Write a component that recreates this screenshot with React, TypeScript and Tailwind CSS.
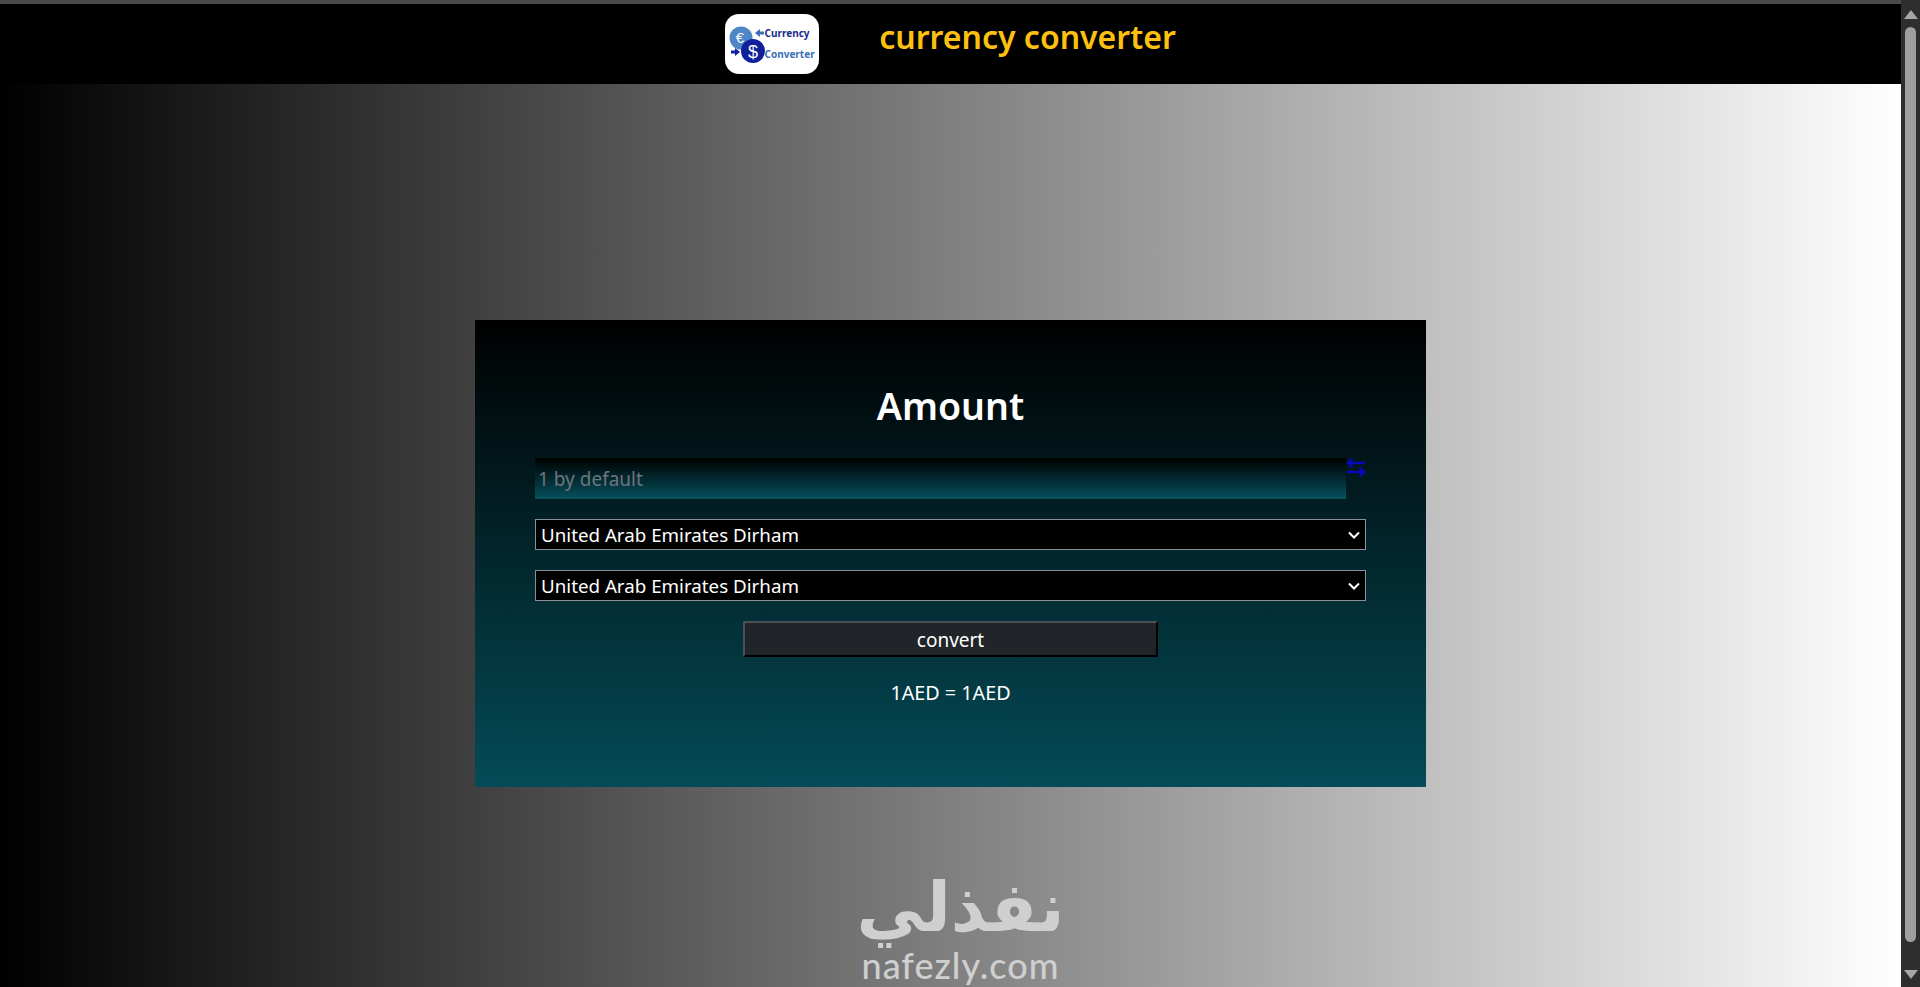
const ui = { fontFamily: '"Noto Sans", "Open Sans", sans-serif' };

function LogoIcon() {
  return (
    <svg viewBox="0 0 94 60" className="h-[60px] w-[94px] shrink-0">
      <rect width="94" height="60" rx="14" fill="#ffffff" />
      <circle cx="16" cy="24" r="11.500" fill="#4f86c6" />
      <text x="15" y="29" textAnchor="middle" fontSize="15" fill="#ffffff" fontFamily="Liberation Sans">€</text>
      <circle cx="28" cy="37" r="12" fill="#10209a" />
      <text x="28" y="43.500" textAnchor="middle" fontSize="18" fill="#ffffff" fontFamily="Liberation Sans">$</text>
      <path d="M30 19l5-4v2.500h4v3h-4v2.500z" fill="#3a6fb5" />
      <path d="M15 38l-5-4v2.500h-4v3h4v2.500z" fill="#10209a" />
      <text x="39.500" y="23" fontSize="10" fontWeight="700" fill="#1a2a8c" fontFamily="Noto Sans">Currency</text>
      <text x="39.500" y="44" fontSize="10" fontWeight="700" fill="#3a6fb5" fontFamily="Noto Sans">Converter</text>
    </svg>
  );
}

function SwapIcon() {
  return (
    <svg viewBox="0 0 20 20" className="h-5 w-5 shrink-0" fill="none" stroke="#0808c0" strokeWidth="2.400">
      <path d="M19 5H2M6.500 0.500L2 5l4.500 4.500" />
      <path d="M1 14h17M13.500 9.500L18 14l-4.500 4.500" />
    </svg>
  );
}

function CurrencySelect() {
  return (
    <div className="flex h-[31px] w-[831px] items-center justify-between border border-[#8a9096] bg-black px-[5px] text-[18.75px] text-white">
      <span className="pt-[2px]">United Arab Emirates Dirham</span>
      <svg viewBox="0 0 12 8" className="h-[8px] w-[12px]" fill="none" stroke="#ffffff" strokeWidth="2">
        <path d="M1 1.500l5 5 5-5" />
      </svg>
    </div>
  );
}

function Scrollbar() {
  return (
    <aside className="flex w-[19px] shrink-0 flex-col items-center bg-[#2e2e2e] pt-[10px]">
      <div className="h-0 w-0 border-x-[7px] border-b-[9px] border-x-transparent border-b-[#a6a6a6]" />
      <div className="mt-[8px] h-[915px] w-[11px] rounded-full bg-[#9f9f9f]" />
      <div className="mt-[28px] h-0 w-0 border-x-[7px] border-t-[9px] border-x-transparent border-t-[#a6a6a6]" />
    </aside>
  );
}

export default function App() {
  return (
    <div className="flex h-[987px] w-[1920px] overflow-hidden bg-black" style={ui}>
      <main className="flex min-w-0 flex-1 flex-col">
        <header className="flex h-[84px] items-center justify-center gap-[60px] border-t-4 border-[#4a4a4a] bg-black">
          <LogoIcon />
          <h1 className="mb-[14px] text-[32px] font-semibold leading-none text-[#fdc010]">currency converter</h1>
        </header>

        <section className="flex flex-1 flex-col items-center bg-[linear-gradient(to_right,#000000,#ffffff)] pt-[236px]">
          {/* tarjeta */}
          <div className="flex h-[467px] w-[951px] flex-col items-center bg-[linear-gradient(to_bottom,#000000,#044b57)] px-[60px] pt-[60px]">
            <h2 className="text-[37.5px] font-semibold leading-[52px] text-white">Amount</h2>
            <div className="mt-[26px] flex w-[831px] items-start">
              <div className="flex h-[41px] flex-1 items-center bg-[linear-gradient(to_bottom,#000000,#05515e)] pl-[3px] text-[19px] text-[#6c757d]">
                <span className="pt-[2px]">1 by default</span>
              </div>
              <SwapIcon />
            </div>
            <div className="mt-[20px] flex flex-col gap-[20px]">
              <CurrencySelect />
              <CurrencySelect />
            </div>
            <button className="mt-[20px] h-[36px] w-[415px] border-2 border-t-[#4a5056] border-l-[#4a5056] border-r-black border-b-black bg-[#212529] pt-[2px] text-[19px] text-white">
              convert
            </button>
            <p className="mt-[22px] text-[19.75px] leading-[28px] text-white">1AED = 1AED</p>
          </div>

          {/* marca */}
          <div className="ml-[20px] mt-[86px] flex flex-col items-center gap-[4px] text-[#cfcfcf]">
            <span className="text-[68px] font-bold leading-[70px]" style={{ fontFamily: '"DejaVu Sans", sans-serif' }} dir="rtl">نفذلي</span>
            <span className="text-[36px] font-medium leading-[36px] tracking-[1px]" style={{ fontFamily: "Lato, sans-serif" }}>nafezly.com</span>
          </div>
        </section>
      </main>
      <Scrollbar />
    </div>
  );
}
